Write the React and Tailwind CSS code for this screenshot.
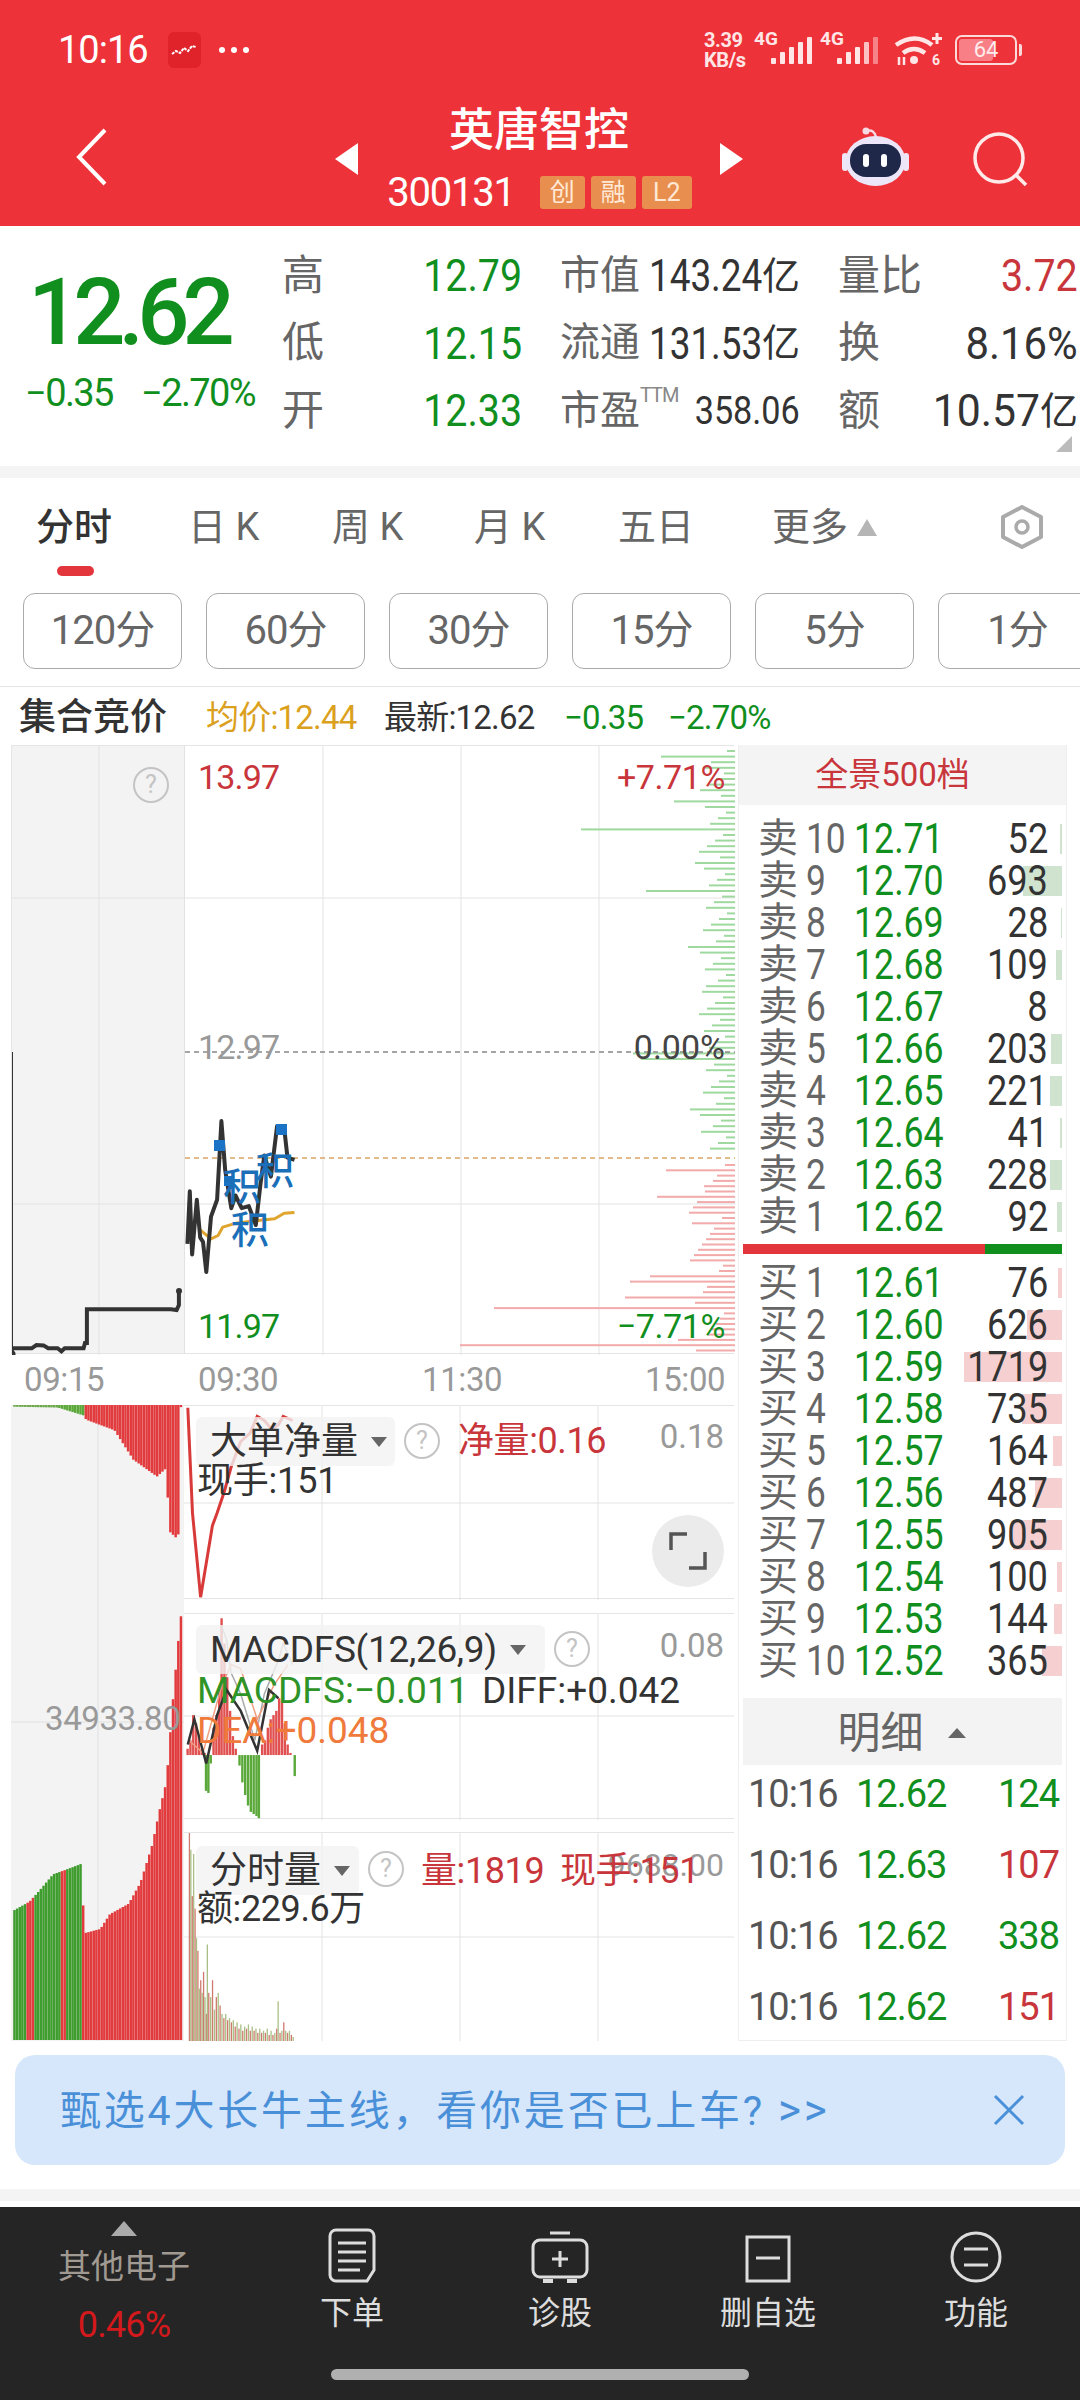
import React from 'react';

// zoomed-crop coordinates -> local svg coordinates
const toPts = (pts, ox, oy, y0 = 1390) =>
  pts.map(([x, y]) => `${(x / 2.119 - ox).toFixed(1)},${(y0 + y / 2.376 - oy).toFixed(1)}`).join(' ');

const lerpProfile = (profile, x) => {
  for (let i = 0; i < profile.length - 1; i++) {
    const [a, ay] = profile[i];
    const [b, by] = profile[i + 1];
    if (x >= a && x <= b) return ay + ((by - ay) * (x - a)) / (b - a);
  }
  return profile[profile.length - 1][1];
};

const sellRows = [
  ['卖', '10', '12.71', '52', 2], ['卖', '9', '12.70', '693', 39], ['卖', '8', '12.69', '28', 1], ['卖', '7', '12.68', '109', 6],
  ['卖', '6', '12.67', '8', 0], ['卖', '5', '12.66', '203', 11], ['卖', '4', '12.65', '221', 12], ['卖', '3', '12.64', '41', 2],
  ['卖', '2', '12.63', '228', 12], ['卖', '1', '12.62', '92', 5],
];
const buyRows = [
  ['买', '1', '12.61', '76', 4], ['买', '2', '12.60', '626', 35], ['买', '3', '12.59', '1719', 98], ['买', '4', '12.58', '735', 40],
  ['买', '5', '12.57', '164', 9], ['买', '6', '12.56', '487', 27], ['买', '7', '12.55', '905', 49], ['买', '8', '12.54', '100', 5],
  ['买', '9', '12.53', '144', 8], ['买', '10', '12.52', '365', 20],
];
const trades = [
  ['12.62', '124', 'text-[#118f1e]'], ['12.63', '107', 'text-[#c8353b]'],
  ['12.62', '338', 'text-[#118f1e]'], ['12.62', '151', 'text-[#c8353b]'],
];

const StatusBar = () => (
  <div className="h-[100px] flex items-center text-white">
    <span className="ml-[58px] text-[38px] leading-none tracking-[-1px]">10:16</span>
    <div className="ml-[20px] w-[33px] h-[36px] rounded-[6px] bg-[#e0222a] flex items-center justify-center">
      <svg width="28" height="14" viewBox="0 0 28 14"><path d="M2 11l4-3 4 2 4-5 4 3 4-5 4 1" fill="none" stroke="#fff" strokeWidth="2" strokeDasharray="3 1" /></svg>
    </div>
    <span className="ml-[18px] flex gap-[6px]">
      <i className="w-[6px] h-[6px] rounded-full bg-white" /><i className="w-[6px] h-[6px] rounded-full bg-white" /><i className="w-[6px] h-[6px] rounded-full bg-white" />
    </span>
    <div className="ml-auto w-[48px] text-[20px] leading-[20px] font-bold text-[#ffe6e6] tracking-[-0.4px]"><div>3.39</div><div>KB/s</div></div>
    <svg width="190" height="50" viewBox="0 0 190 50">
      <text x="2" y="20" fontSize="19" fill="#ffe6e6" fontWeight="700">4G</text>
      <g fill="#ffe6e6"><rect x="19" y="33" width="5" height="6" rx="1" /><rect x="28" y="27" width="5" height="12" rx="1" /><rect x="37" y="22" width="5" height="17" rx="1" /><rect x="46" y="17" width="5" height="22" rx="1" /><rect x="55" y="12" width="5" height="27" rx="1" /></g>
      <text x="68" y="20" fontSize="19" fill="#ffe6e6" fontWeight="700">4G</text>
      <g fill="#ffe6e6"><rect x="85" y="33" width="5" height="6" rx="1" /><rect x="94" y="27" width="5" height="12" rx="1" /><rect x="103" y="22" width="5" height="17" rx="1" /><rect x="112" y="17" width="5" opacity=".8" height="22" rx="1" /><rect x="121" y="12" width="5" opacity=".45" height="27" rx="1" /></g>
      <g fill="none" stroke="#ffe6e6" strokeWidth="4.5">
        <path d="M144 20q19-13 36 0" /><path d="M151 28q11-8 22 0" />
      </g>
      <circle cx="162" cy="35" r="4" fill="#ffe6e6" />
      <path d="M185 8v11M180 13.5h11" stroke="#ffe6e6" strokeWidth="3" />
      <path d="M147 32v8M152 32v8" stroke="#ffe6e6" strokeWidth="2.5" />
      <text x="180" y="40" fontSize="14" fill="#ffe6e6" fontWeight="700">6</text>
    </svg>
    <div className="ml-[13px] mr-[58px] flex items-center">
      <div className="w-[62px] h-[30px] border-[2px] border-[#fbdada] rounded-[7px] p-[2px] relative">
        <div className="w-[34px] h-full rounded-[3px] bg-[#f77f85]" />
        <span className="absolute inset-0 flex items-center justify-center text-[22px] leading-none text-[#ffecec]">64</span>
      </div>
      <div className="w-[3px] h-[12px] bg-[#fbdada] ml-[2px] rounded-r-[2px]" />
    </div>
  </div>
);

const NavRow = () => (
  <div className="h-[126px] flex items-center relative">
    <svg width="34" height="58" viewBox="0 0 34 58" className="ml-[74px] mt-[-12px]"><path d="M31 2L5 29l26 27" fill="none" stroke="#fff" strokeWidth="4" /></svg>
    <div className="ml-[227px] w-0 h-0 border-y-[16px] border-y-transparent border-r-[23px] border-r-white mt-[-8px]" />
    <div className="w-[362px] flex flex-col items-center text-white">
      <div className="text-[45px] leading-[60px] mt-[-14px] font-medium">英唐智控</div>
      <div className="flex items-center mt-[13px] h-[38px] ml-[1px]">
        <span className="text-[40px] leading-none tracking-[-1.2px]">300131</span>
        <span className="ml-[25px] w-[45px] h-[33px] rounded-[3px] bg-[#e88f50] text-[25px] leading-[33px] text-center text-[#ffe9d6]">创</span>
        <span className="ml-[6px] w-[45px] h-[33px] rounded-[3px] bg-[#e88f50] text-[25px] leading-[33px] text-center text-[#ffe9d6]">融</span>
        <span className="ml-[6px] w-[50px] h-[33px] rounded-[3px] bg-[#e88f50] text-[25px] leading-[33px] text-center text-[#ffe9d6]">L2</span>
      </div>
    </div>
    <div className="w-0 h-0 border-y-[16px] border-y-transparent border-l-[23px] border-l-white mt-[-8px]" />
    <svg width="68" height="62" viewBox="0 0 68 62" className="ml-[99px] mt-[-10px]">
      <path d="M25 4q7-2 9 6" fill="none" stroke="#f6d9e2" strokeWidth="2.5" />
      <circle cx="24" cy="4" r="3.5" fill="#f6d9e2" />
      <rect x="0" y="26" width="6" height="18" rx="3" fill="#efe6f7" />
      <rect x="61" y="26" width="6" height="18" rx="3" fill="#efe6f7" />
      <ellipse cx="33.5" cy="34" rx="30" ry="25" fill="#ece6f8" />
      <rect x="8" y="17" width="51" height="33" rx="16" fill="#20284a" />
      <rect x="21" y="27" width="6" height="13" rx="3" fill="#fff" />
      <rect x="39" y="27" width="6" height="13" rx="3" fill="#fff" />
    </svg>
    <svg width="58" height="58" viewBox="0 0 58 58" className="ml-[63px] mt-[-4px]">
      <circle cx="26" cy="26" r="24" fill="none" stroke="#ffeaea" strokeWidth="3.5" />
      <path d="M43 43l10 10" stroke="#ffeaea" strokeWidth="3.5" />
    </svg>
  </div>
);

// digits in the app are tall and narrow, so they get squeezed from the right edge
const Value = ({ num, unit, className }) => (
  <span className="w-0 flex justify-end items-center whitespace-nowrap">
    <span className={`inline-block origin-right leading-none ${className}`}>{num}</span>
    {unit && <span className="text-[38px] leading-none text-[#333]">{unit}</span>}
  </span>
);

const QuoteRow = ({ items }) => (
  <div className="h-[67.5px] flex items-center text-[#666]">
    {items.map(([label, labelCls, value], i) => (
      <div key={i} className={`w-[240px] flex items-center justify-between ${i > 0 ? 'ml-[38px]' : ''}`}>
        <span className={`whitespace-nowrap ${labelCls}`}>{label}</span>
        {value}
      </div>
    ))}
  </div>
);

const QuotePanel = () => {
  const big = 'text-[42px] leading-none';
  const mid = 'text-[40px] leading-none';
  const green = 'text-[45px] text-[#118f1e] scale-x-[0.875]';
  return (
    <div className="h-[240px] flex relative">
      <div className="w-[282px] shrink-0 flex flex-col">
        <div className="ml-[28px] mt-[42px] text-[92px] leading-[90px] text-[#118f1e] font-medium tracking-[-7px]">12.62</div>
        <div className="ml-[25px] mt-[15px] text-[38px] leading-[40px] text-[#118f1e] flex tracking-[-1.6px]">
          <span className="w-[116px]">−0.35</span><span>−2.70%</span>
        </div>
      </div>
      <div className="pt-[16px]">
        <QuoteRow items={[
          ['高', big, <Value num="12.79" className={green} />],
          ['市值', mid, <Value num="143.24" unit="亿" className="text-[45px] text-[#333] scale-x-[0.82]" />],
          ['量比', big, <Value num="3.72" className="text-[45px] text-[#c8353b] scale-x-[0.875]" />],
        ]} />
        <QuoteRow items={[
          ['低', big, <Value num="12.15" className={green} />],
          ['流通', mid, <Value num="131.53" unit="亿" className="text-[45px] text-[#333] scale-x-[0.82]" />],
          ['换', big, <Value num="8.16%" className="text-[45px] text-[#333] scale-x-[0.93]" />],
        ]} />
        <QuoteRow items={[
          ['开', big, <Value num="12.33" className={green} />],
          [<span>市盈<sup className="text-[20px] text-[#888] align-[12px] tracking-[-1px]">TTM</sup></span>, mid, <Value num="358.06" className="text-[38px] text-[#333] scale-x-[0.9]" />],
          ['额', big, <Value num="10.57" unit="亿" className="text-[45px] text-[#333] scale-x-[0.95]" />],
        ]} />
      </div>
      <svg width="16" height="16" viewBox="0 0 16 16" className="absolute left-[1056px] top-[210px]"><path d="M16 0v16H0z" fill="#bbb" /></svg>
    </div>
  );
};

const Tabs = () => (
  <div className="h-[102px] flex items-start pt-[26px] pl-[36px] relative text-[38px] leading-[46px] text-[#666]">
    <span className="w-[152px] text-[#333] font-medium">分时</span>
    <span className="w-[144px]">日 K</span>
    <span className="w-[142px]">周 K</span>
    <span className="w-[144px]">月 K</span>
    <span className="w-[154px]">五日</span>
    <span className="flex items-center">更多<i className="ml-[9px] w-0 h-0 border-x-[10px] border-x-transparent border-b-[17px] border-b-[#b5b5b5]" /></span>
    <svg width="44" height="44" viewBox="0 0 44 44" className="absolute left-[1000px] top-[27px]">
      <path d="M22 2l19 10v20L22 42 3 32V12z" fill="none" stroke="#aaa" strokeWidth="4" strokeLinejoin="round" />
      <circle cx="22" cy="22" r="6" fill="none" stroke="#aaa" strokeWidth="3.5" />
    </svg>
    <div className="absolute left-[57px] top-[88px] w-[37px] h-[10px] rounded-full bg-[#e2353c]" />
  </div>
);

const Periods = () => (
  <div className="h-[107px] pt-[13px] pl-[23px] flex gap-[24px] overflow-hidden border-b border-[#e5e5e5]">
    {['120分', '60分', '30分', '15分', '5分', '1分'].map((p) => (
      <div key={p} className="shrink-0 w-[159px] h-[76px] rounded-[12px] border border-[#aaa] flex items-center justify-center text-[40px] text-[#666] tracking-[-1px]">{p}</div>
    ))}
  </div>
);

const InfoLine = () => (
  <div className="h-[58px] pl-[19px] pt-[3px] flex items-center text-[33px] leading-none tracking-[-0.8px]">
    <span className="text-[37px] text-[#333] font-medium w-[187px] tracking-[0px]">集合竞价</span>
    <span className="text-[#dba11e] w-[178px]">均价:12.44</span>
    <span className="text-[#333] w-[180px]">最新:12.62</span>
    <span className="text-[#118f1e] w-[104px]">−0.35</span>
    <span className="text-[#118f1e]">−2.70%</span>
  </div>
);

const greenLong = { 1: 660, 9: 673, 14: 580, 20: 694, 25: 645, 35: 687, 42: 705, 54: 632, 55: 640, 64: 689, 68: 700 };
const redLong = { 1: 665, 4: 703, 6: 656, 11: 691, 16: 697, 21: 649, 22: 629, 25: 624, 27: 493, 33: 677, 34: 459 };

const Depth = () => {
  const bars = [];
  for (let i = 0; i < 72; i++) {
    const y = 749 + i * 5.6;
    const x = greenLong[i] ?? 734 - (8 + ((i * 37) % 29));
    bars.push(<rect key={`g${i}`} x={x - 11} y={y - 745} width={734 - x} height="2" fill="#9fd99f" />);
  }
  for (let i = 0; i < 36; i++) {
    const y = 1163 + i * 5.3;
    const x = redLong[i] ?? 734 - (10 + ((i * 41) % 37));
    bars.push(<rect key={`r${i}`} x={x - 11} y={y - 745} width={734 - x} height="2" fill="#f3aaaa" />);
  }
  return <g>{bars}</g>;
};

const Label = ({ className, children }) => (
  <span className={`absolute -translate-y-1/2 leading-none whitespace-nowrap ${className}`}>{children}</span>
);

const Hint = ({ className }) => (
  <span className={`absolute -translate-y-1/2 w-[36px] h-[36px] rounded-full border-[2px] border-[#c4c4c4] text-[#c4c4c4] text-[25px] leading-[32px] text-center ${className}`}>?</span>
);

const MainChart = () => {
  const main = [[395,1195],[400,1070],[405,1220],[415,1090],[422,1180],[428,1190],[435,1262],[445,1130],[458,1090],[467,903],[475,1020],[488,1110],[497,1080],[510,1110],[525,1105],[540,1150],[550,1050],[558,985],[572,1035],[585,915],[600,920],[607,990],[622,995]];
  const avg = [[420,1160],[445,1183],[460,1175],[470,1155],[500,1145],[540,1140],[580,1135],[600,1122],[622,1120]];
  const pre = [[23,1458],[23,1443],[65,1443],[75,1435],[90,1436],[100,1443],[120,1443],[128,1450],[135,1443],[175,1443],[178,1430],[182,1430],[182,1350],[360,1350],[372,1352],[377,1340],[377,1308]];
  return (
    <div className="relative h-[609px] w-[723px] flex border-y border-[#e5e5e5] border-l">
      <div className="w-[173px] bg-[#f3f3f3] border-r border-[#e2e2e2]" />
      <svg width="723" height="609" viewBox="0 0 723 609" className="absolute left-0 top-0">
        <path d="M87 0v609M311 0v609M449 0v609M587 0v609M0 152h723M0 458h723" stroke="#e3e3e3" strokeWidth="1" />
        <Depth />
        <path d="M173 306h550" stroke="#888" strokeWidth="1.5" strokeDasharray="5 4" />
        <path d="M173 412h550" stroke="#d9a565" strokeWidth="1.5" strokeDasharray="5 4" />
        <path d="M0 306v300" stroke="#333" strokeWidth="2" />
        <polyline points={toPts(pre, 11, 745, 740)} fill="none" stroke="#333" strokeWidth="4" />
        <circle cx="167" cy="545" r="3" fill="#333" /><circle cx="0" cy="608" r="3.5" fill="#333" />
        <polyline points={toPts(avg, 11, 745, 740)} fill="none" stroke="#e0a52e" strokeWidth="3" strokeLinejoin="round" />
        <polyline points={toPts(main, 11, 745, 740)} fill="none" stroke="#333" strokeWidth="4" strokeLinejoin="round" />
        <g fill="#1a73c4"><rect x="202" y="394" width="11" height="11" /><rect x="264" y="378" width="11" height="11" /><rect x="212" y="430" width="10" height="10" /></g>
      </svg>
      <Hint className="left-[121px] top-[39px]" />
      <Label className="left-[186px] top-[31px] text-[34px] text-[#c8353b] tracking-[-0.8px]">13.97</Label>
      <Label className="right-[9px] top-[31px] text-[34px] text-[#c8353b] tracking-[-0.4px]">+7.71%</Label>
      <Label className="left-[186px] top-[301px] text-[34px] text-[#999] tracking-[-0.8px]">12.97</Label>
      <Label className="right-[9px] top-[301px] text-[34px] text-[#444]">0.00%</Label>
      <Label className="left-[186px] top-[580px] text-[34px] text-[#118f1e] tracking-[-0.8px]">11.97</Label>
      <Label className="right-[9px] top-[580px] text-[34px] text-[#118f1e] tracking-[-0.4px]">−7.71%</Label>
      <Label className="left-[244px] top-[425px] text-[38px] font-medium text-[#1a6fb8]">积</Label>
      <Label className="left-[211px] top-[441px] text-[38px] font-medium text-[#1a6fb8]">积</Label>
      <Label className="left-[219px] top-[484px] text-[38px] font-medium text-[#1a6fb8]">积</Label>
    </div>
  );
};

const TimeAxis = () => (
  <div className="relative h-[51px] w-[723px] flex items-center text-[33px] text-[#999] leading-none tracking-[-0.4px]">
    <span className="ml-[13px] w-[174px]">09:15</span>
    <span className="w-[224px]">09:30</span>
    <span className="w-[223px]">11:30</span>
    <span>15:00</span>
  </div>
);

const PremarketBars = () => {
  const top = [[20,4],[120,6],[175,25],[180,35],[240,60],[280,130],[330,170],[350,150],[356,300],[375,320],[380,5]];
  const bottom = [[28,1235],[60,1215],[80,1190],[110,1150],[135,1140],[170,1125],[176,1290],[210,1280],[230,1245],[270,1220],[295,1170],[320,1080],[335,1000],[350,930],[365,720],[380,537]];
  const isGreen = (z) => (z < 52) || (z > 72 && z < 125) || (z > 135 && z < 173);
  const bars = [];
  for (let z = 28; z < 382; z += 5.6) {
    const x = z / 2.119 - 11;
    const d = lerpProfile(top, z) / 2.376;
    const t = (lerpProfile(bottom, z) - 35) / 2.376;
    bars.push(<rect key={`t${z}`} x={x} y={0} width="2.5" height={d} fill={z > 120 && z < 175 ? '#5aa83a' : z <= 120 ? '#6aa84a' : '#e23b3d'} />);
    bars.push(<rect key={`b${z}`} x={x} y={t} width="2.5" height={635 - t} fill={isGreen(z) ? '#3f9c2e' : '#e23b3d'} />);
  }
  return (
    <div className="relative w-[173px] h-full bg-[#f3f3f3]">
      <svg width="173" height="636" viewBox="0 0 173 636" className="absolute left-0 top-0">
        <path d="M87 0v636M0 317h173" stroke="#e0e0e0" strokeWidth="1" />
        {bars}
      </svg>
      <Label className="left-[34px] top-[313px] text-[33px] text-[#999] tracking-[-0.4px]">34933.80</Label>
    </div>
  );
};

const Grid = ({ mid, h }) => (
  <path d={`M138 0v${h}M276 0v${h}M414 0v${h}M0 ${mid}h550`} stroke="#e3e3e3" strokeWidth="1" />
);

const Selector = ({ className, children }) => (
  <div className={`absolute flex items-center h-[49px] rounded-[6px] bg-[#f2f2f2]/80 pl-[14px] text-[#333] text-[37px] leading-none whitespace-nowrap ${className}`}>
    {children}
    <i className="ml-[13px] w-0 h-0 border-x-[8px] border-x-transparent border-t-[10px] border-t-[#666]" />
  </div>
);

const PanelNet = () => {
  const line = [[398,40],[408,290],[425,490],[440,390],[450,320],[460,290],[475,240],[490,180],[510,120],[530,100],[545,60],[560,70],[575,90],[590,80],[600,60],[620,70]];
  return (
    <div className="relative h-[194px] border-y border-[#e5e5e5]">
      <svg width="550" height="194" viewBox="0 0 550 194" className="absolute left-0 top-0">
        <Grid mid={97} h={194} />
        <polyline points={toPts(line, 184, 1405)} fill="none" stroke="#d83a3a" strokeWidth="3" />
      </svg>
      <Selector className="left-[12px] top-[11px] w-[199px]">大单净量</Selector>
      <Hint className="left-[220px] top-[35px]" />
      <Label className="left-[274px] top-[35px] text-[36px] text-[#c8353b] tracking-[-0.4px]">净量:0.16</Label>
      <Label className="right-[10px] top-[30px] text-[33px] text-[#999]">0.18</Label>
      <Label className="left-[13px] top-[75px] text-[36px] text-[#333] tracking-[-0.2px]">现手:151</Label>
      <div className="absolute left-[468px] top-[109px] w-[72px] h-[72px] rounded-full bg-[#ebebeb] flex items-center justify-center">
        <svg width="38" height="40" viewBox="0 0 38 40"><path d="M18 3H2v16M36 21v16H20" fill="none" stroke="#555" strokeWidth="3.5" /></svg>
      </div>
    </div>
  );
};

const PanelMacd = () => {
  const red = [[395,850],[401,830],[407,770],[413,790],[419,820],[425,850],[431,860],[450,800],[456,770],[462,700],[467,540],[473,600],[479,680],[485,760],[491,820],[497,850],[553,840],[559,830],[565,800],[571,780],[577,770],[583,760],[589,730],[595,735],[601,790],[607,840],[613,860]];
  const green = [[434,950],[439,955],[444,885],[505,890],[511,930],[517,960],[523,985],[529,1000],[535,1005],[541,1010],[546,1015],[622,915]];
  const gray = [[470,560],[480,590],[490,670],[510,720],[540,830],[560,720],[590,640],[600,600],[620,650]];
  const orange = [[400,830],[430,860],[470,700],[490,650],[510,660],[545,780],[580,700],[610,650]];
  const black = [[398,840],[412,780],[437,885],[460,770],[480,710],[510,760],[545,855],[570,710],[590,730]];
  const y = (v) => 1390 + v / 2.376 - 1613;
  const x = (v) => v / 2.119 - 184;
  return (
    <div className="relative h-[206px] mt-[14px] border-y border-[#e5e5e5]">
      <svg width="550" height="206" viewBox="0 0 550 206" className="absolute left-0 top-0">
        <Grid mid={102} h={206} />
        {red.map(([a, b]) => <rect key={a} x={x(a)} y={y(b)} width="2.4" height={y(865) - y(b)} fill="#e05050" />)}
        {green.map(([a, b]) => <rect key={a} x={x(a)} y={y(865)} width="2.4" height={y(b) - y(865)} fill="#5aa83a" />)}
        <polyline points={toPts(gray, 184, 1613)} fill="none" stroke="#aaa" strokeWidth="1.5" />
        <polyline points={toPts(orange, 184, 1613)} fill="none" stroke="#f0a080" strokeWidth="1.5" />
        <polyline points={toPts(black, 184, 1613)} fill="none" stroke="#333" strokeWidth="2.5" />
      </svg>
      <Selector className="left-[12px] top-[11px] w-[349px] tracking-[-0.3px]">MACDFS(12,26,9)</Selector>
      <Hint className="left-[370px] top-[35px]" />
      <Label className="right-[10px] top-[31px] text-[33px] text-[#999]">0.08</Label>
      <Label className="left-[13px] top-[76px] text-[37px] text-[#2f9428] tracking-[0.1px]">MACDFS:−0.011</Label>
      <Label className="left-[298px] top-[76px] text-[37px] text-[#333]">DIFF:+0.042</Label>
      <Label className="left-[13px] top-[116px] text-[37px] text-[#ef7a3b]">DEA:+0.048</Label>
    </div>
  );
};

const volTops = [[400,1050],[403,1090],[406,1200],[409,1100],[412,1230],[415,1300],[418,1330],[421,1420],[424,1400],[427,1430],[430,1380],[433,1440],[436,1480],[438,1315],[441,1430],[445,1440],[449,1400],[453,1470],[457,1440],[461,1430],[465,1460],[469,1480],[473,1490],[477,1480],[481,1495],[485,1490],[489,1500],[493,1495],[497,1510],[501,1500],[505,1515],[509,1505],[513,1520],[517,1510],[521,1515],[525,1505],[529,1520],[533,1510],[537,1520],[541,1515],[545,1525],[549,1515],[553,1525],[557,1520],[561,1525],[565,1515],[569,1530],[573,1520],[577,1530],[581,1525],[585,1515],[588,1450],[592,1525],[596,1520],[600,1500],[604,1520],[608,1525],[612,1520],[616,1530],[620,1535]];

const PanelVol = () => {
  const y = (v) => 1390 + v / 2.376 - 1832;
  const x = (v) => v / 2.119 - 184;
  return (
    <div className="relative h-[208px] mt-[13px] border-t border-[#e5e5e5]">
      <svg width="550" height="208" viewBox="0 0 550 208" className="absolute left-0 top-0">
        <Grid mid={104} h={208} />
        {volTops.map(([a, b], i) => <rect key={a} x={x(a)} y={y(b)} width="1.3" height={y(1545) - y(b)} fill={i % 2 ? '#a9bf85' : '#cf7a6e'} />)}
      </svg>
      <Selector className="left-[12px] top-[13px] w-[163px]">分时量</Selector>
      <Hint className="left-[184px] top-[36px]" />
      <Label className="right-[10px] top-[32px] text-[32px] text-[#999]">9688.00</Label>
      <Label className="left-[237px] top-[38px] text-[36px] text-[#c8353b] tracking-[-0.4px]">量:1819</Label>
      <Label className="left-[376px] top-[38px] text-[36px] text-[#c8353b] tracking-[-0.4px]">现手:151</Label>
      <Label className="left-[13px] top-[76px] text-[36px] text-[#333] tracking-[-0.4px]">额:229.6万</Label>
    </div>
  );
};

const BookRow = ({ row, tone }) => {
  const [side, level, price, qty, bar] = row;
  return (
    <div className="relative h-[42px] shrink-0 flex items-center leading-none pl-[19px]">
      {bar > 0 && <div style={{ width: bar }} className={`absolute right-[4px] top-[6px] h-[30px] ${tone}`} />}
      <span className="relative w-[48px] text-[40px] text-[#666]">{side}</span>
      <span className="relative w-[48px] text-[42px] text-[#666] origin-left scale-x-[0.84]">{level}</span>
      <span className="relative text-[42px] text-[#118f1e] origin-left scale-x-[0.85]">{price}</span>
      <span className="relative ml-auto mr-[18px] w-0 flex justify-end">
        <span className="text-[42px] text-[#333] origin-right scale-x-[0.86]">{qty}</span>
      </span>
    </div>
  );
};

const OrderBook = () => (
  <div className="w-[329px] h-[1296px] border-x border-b border-[#eeeeee] flex flex-col">
    <div className="h-[60px] shrink-0 bg-[#f4f4f4] flex items-center justify-center pr-[20px] text-[33px] text-[#c8353b]">全景500档</div>
    <div className="h-[13px] shrink-0" />
    {sellRows.map((r) => <BookRow key={r[0] + r[1]} row={r} tone="bg-[#cfe3cf]" />)}
    <div className="mt-[6px] mx-[4px] h-[10px] flex shrink-0">
      <div className="w-[242px] bg-[#e2353c]" />
      <div className="flex-1 bg-[#118f1e]" />
    </div>
    <div className="h-[8px] shrink-0" />
    {buyRows.map((r) => <BookRow key={r[0] + r[1]} row={r} tone="bg-[#f6d0d0]" />)}
    <div className="mt-[16px] mx-[4px] h-[67px] pt-[3px] shrink-0 bg-[#f3f3f3] flex items-center justify-center pr-[2px] text-[43px] text-[#666]">
      明细<i className="ml-[24px] w-0 h-0 border-x-[9px] border-x-transparent border-b-[10px] border-b-[#666]" />
    </div>
    <div className="mt-[-7px]">
      {trades.map(([p, q, c], i) => (
        <div key={i} className="h-[71px] flex items-center text-[38px] leading-none pl-[9px] pr-[7px] tracking-[-1px]">
          <span className="w-[108px] text-[#555]">10:16</span>
          <span className="text-[#118f1e]">{p}</span>
          <span className={`ml-auto ${c}`}>{q}</span>
        </div>
      ))}
    </div>
  </div>
);

const Banner = () => (
  <div className="h-[160px] flex flex-col">
    <div className="h-[14px]" />
    <div className="mx-[15px] h-[110px] rounded-[20px] bg-[#d6e7fb] flex items-center pl-[45px] pr-[40px] text-[41px] leading-none text-[#4a90d9]">
      <span className="tracking-[2.8px] whitespace-nowrap">甄选4大长牛主线，看你是否已上车? <span className="text-[44px]">&gt;&gt;</span></span>
      <svg width="32" height="32" viewBox="0 0 32 32" className="ml-auto"><path d="M2 2l28 28M30 2L2 30" stroke="#4a90d9" strokeWidth="3" /></svg>
    </div>
    <div className="h-[24px]" />
    <div className="h-[12px] bg-[#f4f4f4]" />
  </div>
);

const NavItem = ({ label, children }) => (
  <div className="w-[208px] flex flex-col items-center">
    <div className="h-[56px] flex items-end justify-center">{children}</div>
    <div className="mt-[10px] text-[32px] leading-[40px] text-[#ddd] whitespace-nowrap">{label}</div>
  </div>
);

const BottomBar = () => (
  <div className="mt-[6px] h-[193px] bg-[#252525] relative">
    <div className="flex pt-[20px]">
      <div className="w-[248px] flex flex-col items-center mt-[-6px]">
        <i className="w-0 h-0 border-x-[13px] border-x-transparent border-b-[15px] border-b-[#aaa]" />
        <div className="mt-[12px] text-[33px] leading-[38px] text-[#a09a92]">其他电子</div>
        <div className="mt-[20px] text-[36px] leading-[38px] text-[#d3191c] tracking-[-0.8px]">0.46%</div>
      </div>
      <NavItem label="下单">
        <svg width="48" height="55" viewBox="0 0 48 55" fill="none" stroke="#ddd" strokeWidth="3">
          <path d="M8 2h32a6 6 0 0 1 6 6v34l-7 11H8a6 6 0 0 1-6-6V8a6 6 0 0 1 6-6z" />
          <path d="M10 15h28M10 24h28M10 33h28M10 42h22" strokeWidth="3" />
        </svg>
      </NavItem>
      <NavItem label="诊股">
        <svg width="58" height="52" viewBox="0 0 58 52" fill="none" stroke="#ddd" strokeWidth="3">
          <path d="M19 2h20" />
          <rect x="2" y="9" width="54" height="37" rx="7" />
          <path d="M29 20v16M21 28h16" />
          <path d="M12 50h10M36 50h10" strokeWidth="4" />
        </svg>
      </NavItem>
      <NavItem label="删自选">
        <svg width="46" height="48" viewBox="0 0 46 48" fill="none" stroke="#ddd" strokeWidth="3">
          <rect x="2" y="2" width="42" height="44" />
          <path d="M11 23h24" />
        </svg>
      </NavItem>
      <NavItem label="功能">
        <svg width="52" height="52" viewBox="0 0 52 52" fill="none" stroke="#ddd" strokeWidth="3">
          <circle cx="26" cy="26" r="24" />
          <path d="M14 18h24M14 34h24" />
        </svg>
      </NavItem>
    </div>
    <div className="absolute left-[331px] top-[162px] w-[418px] h-[11px] rounded-full bg-[#b0b0b0]" />
  </div>
);

export default function App() {
  return (
    <div className="w-[1080px] h-[2400px] bg-white overflow-hidden flex flex-col relative font-['Roboto','Noto_Sans_CJK_SC',sans-serif]">
      <div className="h-[226px] shrink-0 bg-[#ee3239]">
        <StatusBar />
        <NavRow />
      </div>
      <QuotePanel />
      <div className="h-[12px] shrink-0 bg-[#f4f4f4]" />
      <Tabs />
      <Periods />
      <InfoLine />
      <div className="flex h-[1296px] shrink-0">
        <div className="w-[738px] pl-[11px] flex flex-col">
          <MainChart />
          <TimeAxis />
          <div className="flex h-[636px]">
            <PremarketBars />
            <div className="w-[550px] flex flex-col">
              <PanelNet />
              <PanelMacd />
              <PanelVol />
            </div>
          </div>
        </div>
        <OrderBook />
      </div>
      <Banner />
      <BottomBar />
    </div>
  );
}
